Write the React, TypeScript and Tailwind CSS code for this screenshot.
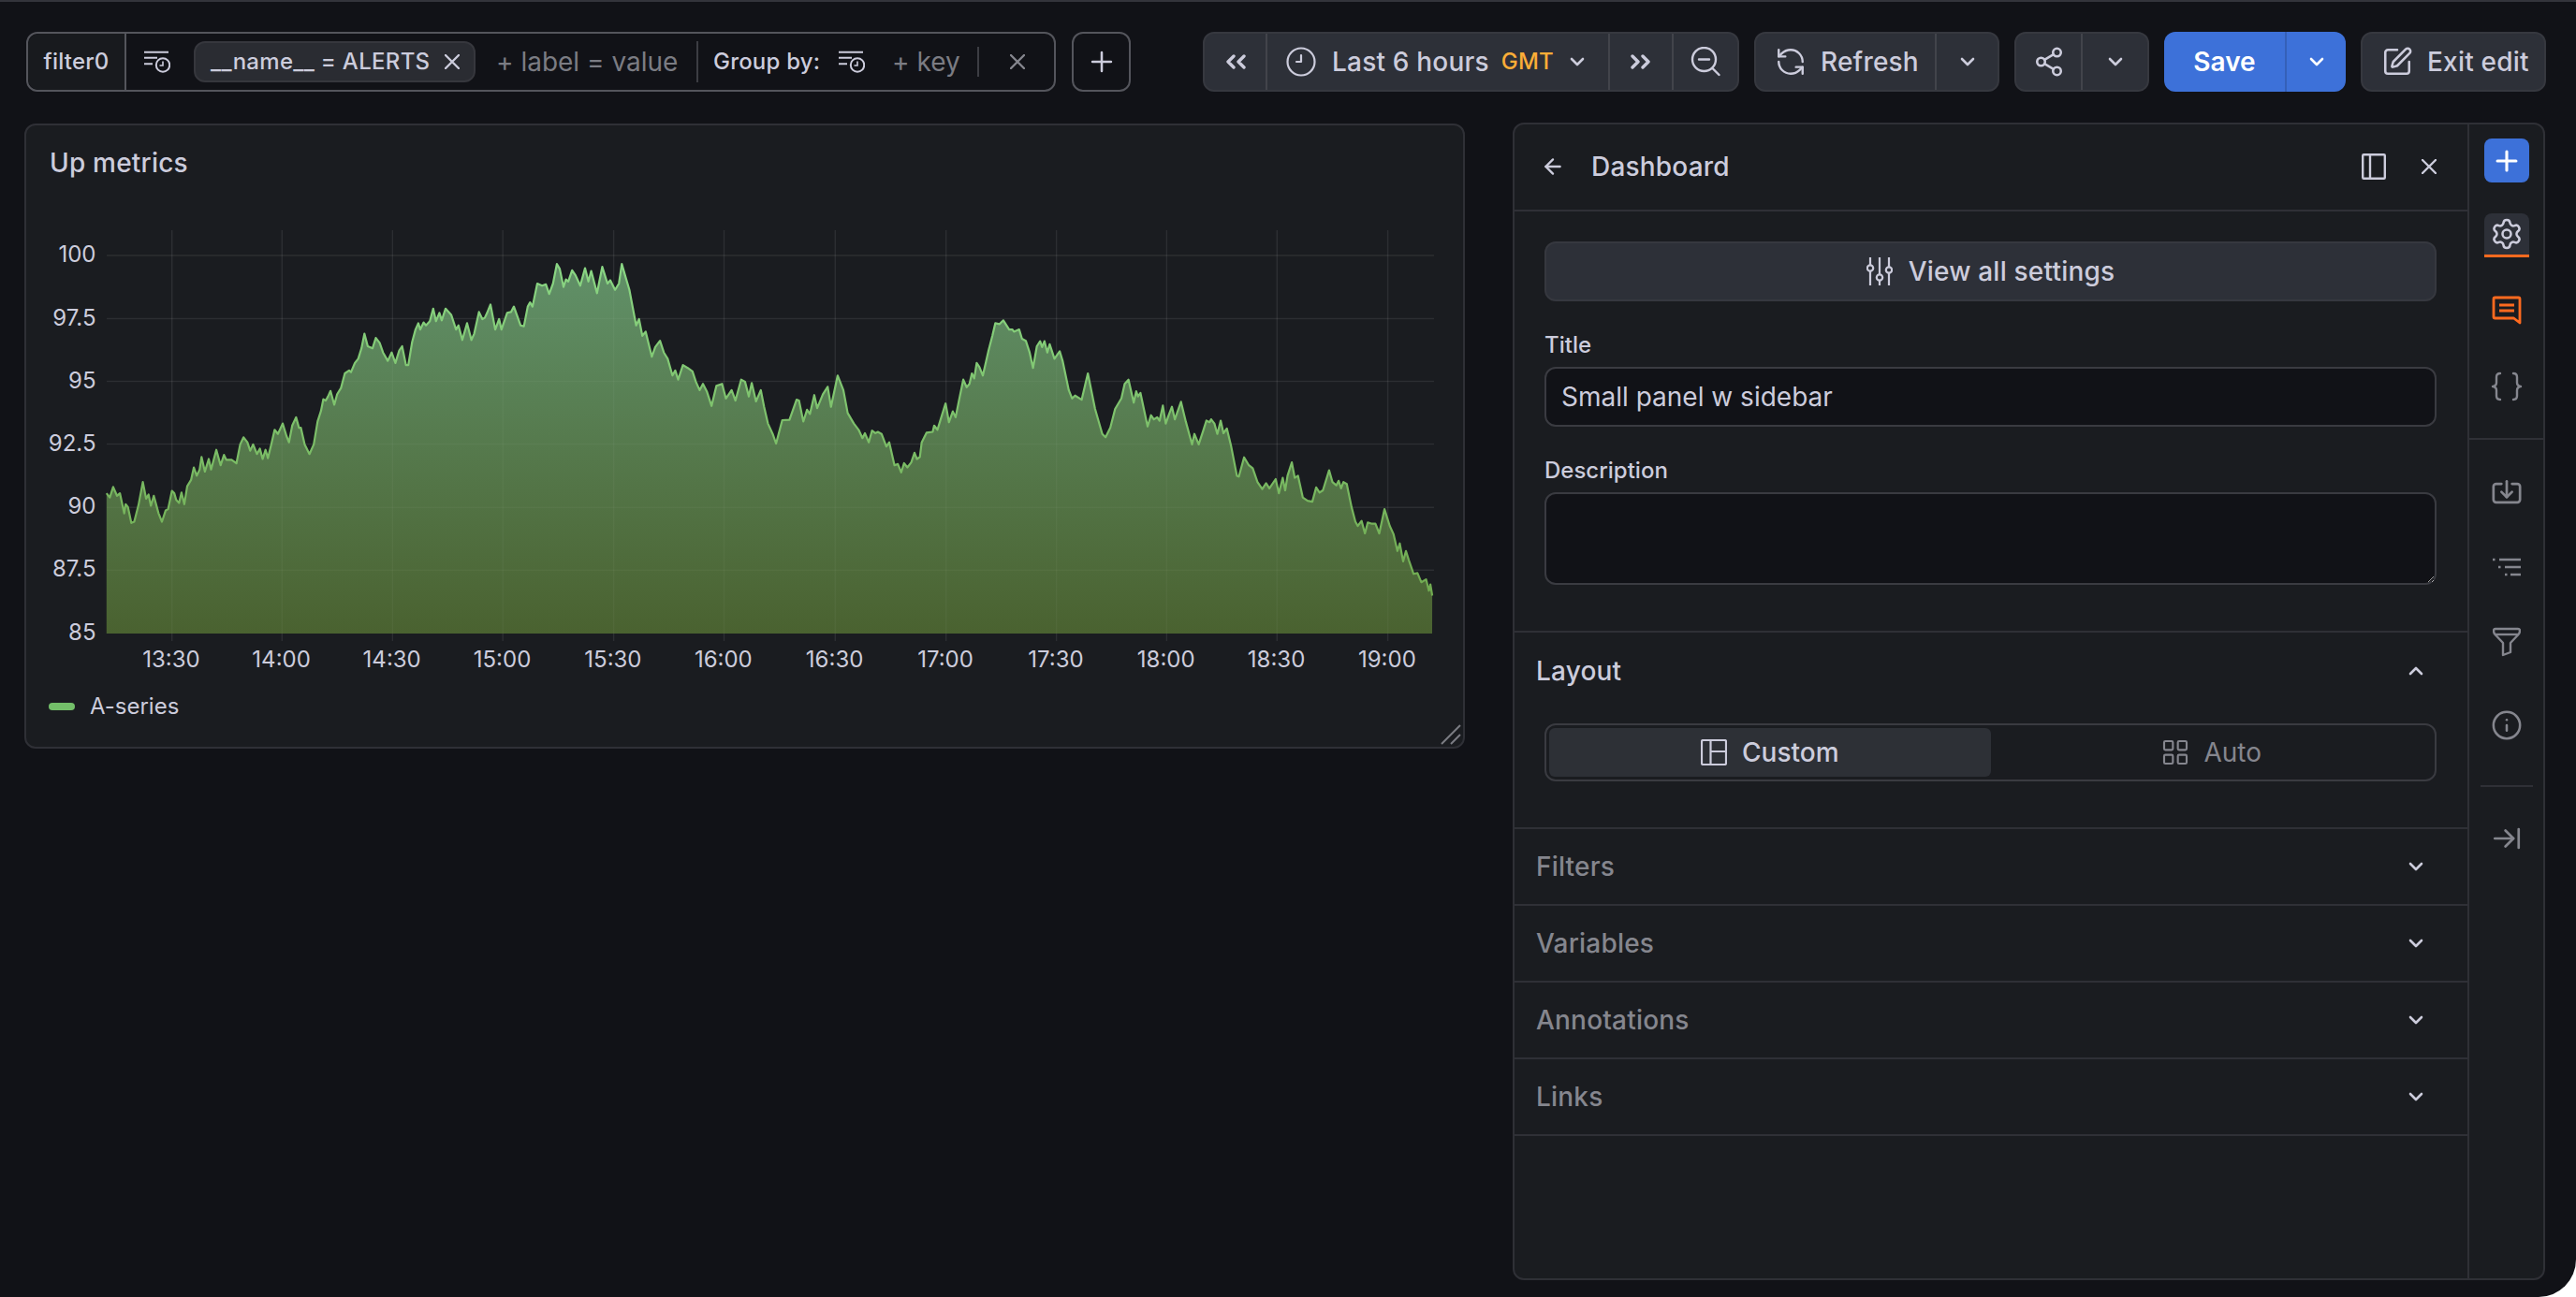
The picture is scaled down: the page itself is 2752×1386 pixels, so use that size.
import { ArrowLeft, ArrowRightToLine, Import, Info, LayoutGrid, Plus, RefreshCcw, Settings, Share2, SquarePen } from 'lucide-react';
import type { ReactNode } from 'react';

// points read off the reference, in crop coordinates (left half, right half)
const leftPts = [223,912,230,922,237,897,245,918,251,912,260,960,263,938,268,945,275,983,281,980,290,940,299,885,306,925,311,915,316,942,322,918,332,960,339,980,347,953,352,950,360,906,365,912,369,928,375,935,380,910,386,938,392,895,400,880,406,850,412,870,418,855,422,825,429,860,437,830,442,855,453,808,462,845,469,820,474,832,485,832,495,840,503,795,510,778,518,790,524,810,530,795,538,818,544,805,550,830,556,808,561,828,568,795,575,760,582,770,592,745,600,775,605,790,612,750,620,730,626,755,630,755,638,795,648,818,657,795,665,740,672,715,677,687,682,690,687,680,692,667,700,700,706,675,714,660,722,625,731,618,735,622,743,600,750,590,757,565,763,530,770,560,780,565,787,540,795,552,802,575,812,595,820,575,828,600,836,570,842,560,850,605,855,605,863,550,870,520,876,505,880,520,887,503,892,510,900,500,907,470,913,500,920,480,925,498,933,470,945,485,955,520,960,510,968,545,978,505,987,545,993,530,1003,478,1010,495,1015,492,1020,480,1027,460,1037,520,1045,495,1050,520,1062,480,1070,478,1076,465,1090,510,1097,512,1105,465,1110,455,1115,465,1125,410,1135,415,1143,412,1150,435,1158,410,1166,363,1172,375,1180,418,1185,400,1190,405,1198,378,1205,390,1215,415,1225,373,1232,405,1238,380,1250,433,1261,370,1272,410,1278,402,1288,425,1296,410,1302,363,1310,395,1318,425,1322,450,1332,510,1338,495,1345,535,1352,525,1365,585,1372,562,1382,547,1390,575,1398,590,1408,630,1414,618,1420,640,1430,605,1440,612,1450,620,1457,645,1465,665,1472,650,1480,668,1490,703,1500,655,1512,650,1520,685,1532,665,1540,690,1552,640,1560,645];
const rightPts = [0,680,6,648,15,692,25,665,32,705,40,745,50,770,57,793,70,737,85,736,100,688,105,690,114,740,122,712,128,722,137,677,143,708,155,675,165,657,172,705,186,630,198,665,207,720,220,745,230,760,238,780,243,768,251,790,258,762,265,768,270,765,278,770,288,800,294,790,305,845,312,842,319,862,325,840,332,850,340,838,347,815,352,830,358,825,362,790,372,767,385,765,388,750,395,760,403,730,412,697,419,742,427,716,433,730,440,690,449,640,456,658,462,650,467,625,472,637,477,600,483,610,490,630,502,570,510,535,516,505,525,507,533,498,545,520,552,520,555,525,566,520,572,542,580,547,588,575,595,612,603,560,610,548,614,562,619,548,625,575,630,555,640,590,651,572,657,595,670,665,677,685,683,678,697,688,710,625,725,710,740,770,747,778,757,755,767,710,780,685,787,650,795,640,806,695,811,668,815,680,820,672,835,752,842,725,848,735,855,730,860,738,867,702,873,745,880,722,886,705,892,735,905,693,915,740,928,795,933,770,942,795,952,760,958,738,965,742,968,735,975,745,981,770,988,738,994,768,1001,757,1010,800,1022,870,1026,872,1037,826,1047,845,1055,852,1065,885,1075,902,1083,888,1090,900,1103,878,1110,912,1118,875,1123,905,1128,870,1137,838,1143,875,1150,870,1160,922,1170,930,1180,932,1188,898,1195,910,1202,905,1215,857,1222,885,1230,893,1235,882,1240,900,1245,885,1252,890,1262,945,1270,980,1275,990,1283,978,1290,1008,1296,982,1305,985,1312,985,1320,1008,1331,950,1342,990,1350,1010,1358,1050,1363,1032,1370,1075,1376,1050,1382,1072,1392,1105,1400,1103,1408,1125,1418,1118,1424,1145,1427,1130,1431,1157];

function toPoints(src: number[], offset: number) {
    const out: string[] = [];
    for (let i = 0; i < src.length; i += 2) {
        out.push(`${(offset + src[i] / 1.96).toFixed(1)},${(120 + src[i + 1] / 2.24).toFixed(1)}`);
    }
    return out;
}

const linePoints = [...toPoints(leftPts, 0), ...toPoints(rightPts, 800)];
const linePath = 'M' + linePoints.join('L');
const areaPath = linePath + 'L1530,677L113.8,677Z';

const yTicks = [
    { label: '100', y: 273 }, { label: '97.5', y: 340.5 }, { label: '95', y: 407.5 }, { label: '92.5', y: 474.5 },
    { label: '90', y: 542.3 }, { label: '87.5', y: 609.3 }, { label: '85', y: 677 },
];
const xTicks = [
    { label: '13:30', x: 183.7 }, { label: '14:00', x: 301.3 }, { label: '14:30', x: 419.4 }, { label: '15:00', x: 537.2 },
    { label: '15:30', x: 655.6 }, { label: '16:00', x: 773.5 }, { label: '16:30', x: 892.3 }, { label: '17:00', x: 1010.7 },
    { label: '17:30', x: 1128.6 }, { label: '18:00', x: 1246.4 }, { label: '18:30', x: 1364.3 }, { label: '19:00', x: 1482.6 },
];

function GridLines({ opacity }: { opacity: number }) {
    return (
        <g stroke="#ffffff" strokeOpacity={opacity} strokeWidth="1.5">
            {yTicks.slice(0, 6).map((t) => (
                <line key={t.label} x1="114" x2="1532" y1={t.y} y2={t.y} />
            ))}
            {xTicks.map((t) => (
                <line key={t.label} x1={t.x} x2={t.x} y1="246" y2="685" />
            ))}
        </g>
    );
}

function HistoryIcon() {
    return (
        <svg width="28" height="24" viewBox="0 0 28 24" fill="none" stroke="#ccccdc" strokeWidth="2" className="shrink-0">
            <path d="M0 1.7H26M0 7.7H14M0 14.3H9" />
            <circle cx="20" cy="15.5" r="7.2" />
            <path d="M20 11.5V16H16.5" strokeWidth="1.6" />
        </svg>
    );
}

function CloseIcon({ color = '#ccccdc', size = 16 }: { color?: string; size?: number }) {
    return (
        <svg width={size} height={size} viewBox="0 0 16 16" fill="none" stroke={color} strokeWidth="2.4" strokeLinecap="round" className="shrink-0">
            <path d="M1 1L15 15M15 1L1 15" />
        </svg>
    );
}

function ChevronDown({ color = '#ccccdc', up = false }: { color?: string; up?: boolean }) {
    return (
        <svg width="16" height="10" viewBox="0 0 16 10" fill="none" stroke={color} strokeWidth="2.6" strokeLinecap="round" strokeLinejoin="round" className="shrink-0">
            <path d={up ? 'M2 8L8 2L14 8' : 'M2 2L8 8L14 2'} />
        </svg>
    );
}

function DoubleChevron({ right = false }: { right?: boolean }) {
    return (
        <svg width="22" height="16" viewBox="0 0 22 16" fill="none" stroke="#ccccdc" strokeWidth="3.4" strokeLinecap="round" strokeLinejoin="round">
            <path d={right ? 'M2 2L8 8L2 14M13 2L19 8L13 14' : 'M9 2L3 8L9 14M20 2L14 8L20 14'} />
        </svg>
    );
}

function ClockIcon() {
    return (
        <svg width="32" height="32" viewBox="0 0 32 32" fill="none" stroke="#ccccdc" strokeWidth="2.2" strokeLinecap="round" strokeLinejoin="round" className="shrink-0">
            <circle cx="16" cy="16" r="14.5" />
            <path d="M16 9V16H11" />
        </svg>
    );
}

function ZoomOutIcon() {
    return (
        <svg width="32" height="32" viewBox="0 0 32 32" fill="none" stroke="#ccccdc" strokeWidth="2.4" strokeLinecap="round">
            <circle cx="14.5" cy="13.5" r="12.5" />
            <path d="M9 13.5H20M23.5 23L30.5 30" />
        </svg>
    );
}

function SlidersIcon() {
    return (
        <svg width="28" height="32" viewBox="0 0 28 32" fill="none" stroke="#ccccdc" strokeWidth="2.2" className="shrink-0">
            <path d="M4 1V9M4 16V31M14 1V19M14 26V31M24 1V11M24 18V31" />
            <circle cx="4" cy="12.5" r="3.2" />
            <circle cx="14" cy="22.5" r="3.2" />
            <circle cx="24" cy="14.5" r="3.2" />
        </svg>
    );
}

function PanelDockIcon() {
    return (
        <svg width="26" height="28" viewBox="0 0 26 28" fill="none" stroke="#ccccdc" strokeWidth="2.4">
            <rect x="1.2" y="1.2" width="23.6" height="25.6" rx="1" />
            <path d="M9 1V27" />
        </svg>
    );
}

function CustomLayoutIcon() {
    return (
        <svg width="28" height="28" viewBox="0 0 28 28" fill="none" stroke="#ccccdc" strokeWidth="2.2" className="shrink-0">
            <rect x="1" y="1" width="26" height="26" rx="1.5" />
            <path d="M10.5 1V27M10.5 13H27" />
        </svg>
    );
}

function CommentIcon() {
    return (
        <svg width="32" height="32" viewBox="0 0 32 32" fill="none" stroke="#ff6a1f" strokeWidth="2.8" strokeLinejoin="round">
            <path d="M3.5 2H28.5C29.5 2 30 2.5 30 3.5V29L23.5 24H3.5C2.5 24 2 23.5 2 22.5V3.5C2 2.5 2.5 2 3.5 2Z" />
            <path d="M8 10H24M8 16H24" />
        </svg>
    );
}

function BracesIcon() {
    return (
        <svg width="36" height="32" viewBox="0 0 34 32" fill="none" stroke="#85868e" strokeWidth="2.4" strokeLinecap="round" strokeLinejoin="round">
            <path d="M10 2C7 2 6 3.5 6 6V12C6 14 5 15.5 2 16C5 16.5 6 18 6 20V26C6 28.5 7 30 10 30" />
            <path d="M24 2C27 2 28 3.5 28 6V12C28 14 29 15.5 32 16C29 16.5 28 18 28 20V26C28 28.5 27 30 24 30" />
        </svg>
    );
}

function ListIcon() {
    return (
        <svg width="30" height="20" viewBox="0 0 30 20" fill="none" stroke="#85868e" strokeWidth="2.6">
            <path d="M0 2H2.5M7 2H30M6 10H8.5M13 10H30M13 18H15.5M19 18H30" />
        </svg>
    );
}

function FunnelIcon() {
    return (
        <svg width="30" height="32" viewBox="0 0 30 32" fill="none" stroke="#85868e" strokeWidth="2.4" strokeLinejoin="round">
            <path d="M3 2H27C28.5 2 29 3 29 4C29 5.5 28.5 7 27 8.5L19 17V27L11 30V17L3 8.5C1.5 7 1 5.5 1 4C1 3 1.5 2 3 2Z" />
            <path d="M2 8H28" />
        </svg>
    );
}

function ToolSlot({ className, children }: { className: string; children: ReactNode }) {
    return <div className={`flex h-12 w-12 items-center justify-center ${className}`}>{children}</div>;
}

function SectionRow({ title }: { title: string }) {
    return (
        <div className="flex h-[82px] items-center justify-between border-b-2 border-[#2f3036] pl-[23px] pr-[47px]">
            <span className="text-[28px] font-medium tracking-[0.2px] text-[#85868e]">{title}</span>
            <ChevronDown />
        </div>
    );
}

export default function App() {
    return (
        <div className="h-[1386px] w-[2752px] overflow-hidden bg-white font-['Inter',sans-serif]">
            <div className="h-full w-full rounded-br-[40px] border-t-2 border-[#33343b] bg-[#111217] text-[#ccccdc]">
                {/* top toolbar */}
                <div className="mt-8 flex h-16 items-stretch pl-7 pr-8">
                    <div className="flex w-[1100px] items-center rounded-xl border-2 border-[#54555c]">
                        <div className="flex h-full w-[105px] items-center justify-center rounded-l-xl border-r-2 border-[#54555c] bg-[#181a1e] text-2xl font-medium tracking-[0.2px]">filter0</div>
                        <div className="ml-[19px]"><HistoryIcon /></div>
                        <div className="ml-[25px] flex h-11 w-[301px] items-center rounded-xl border-2 border-[#36373d] bg-[#2a2c32] pl-4 text-2xl font-medium tracking-[0.3px]">
                            <span className="w-[250px] whitespace-nowrap">__name__ = ALERTS</span>
                            <CloseIcon />
                        </div>
                        <span className="ml-[22px] w-[193px] whitespace-nowrap text-[28px] text-[#7b7c83]">+ label = value</span>
                        <div className="ml-[21px] h-11 w-0.5 bg-[#3c3d43]" />
                        <span className="ml-[16px] w-[114px] whitespace-nowrap text-2xl font-medium tracking-[0.2px]">Group by:</span>
                        <div className="ml-[20px]"><HistoryIcon /></div>
                        <span className="ml-[29px] w-[69px] whitespace-nowrap text-[28px] text-[#7b7c83]">+ key</span>
                        <div className="ml-[22px] h-8 w-0.5 bg-[#3c3d43]" />
                        <div className="ml-[33px]"><CloseIcon color="#85868e" /></div>
                    </div>
                    <div className="ml-[17px] flex w-[63px] items-center justify-center rounded-xl border-2 border-[#54555c]">
                        <Plus size={34} strokeWidth={1.8} />
                    </div>

                    <div className="ml-auto flex w-[573px] items-stretch rounded-xl border-2 border-[#36383f] bg-[#2d3038]">
                        <div className="flex w-[67px] items-center justify-center border-r-2 border-[#42444b]"><DoubleChevron /></div>
                        <div className="flex w-[366px] items-center border-r-2 border-[#42444b] pl-5">
                            <ClockIcon />
                            <span className="ml-[17px] whitespace-nowrap text-[28px] font-medium tracking-[0.2px]">Last 6 hours</span>
                            <span className="ml-[13px] text-2xl font-medium tracking-[0.2px] text-[#fbad37]">GMT</span>
                            <div className="ml-[17px]"><ChevronDown /></div>
                        </div>
                        <div className="flex w-[68px] items-center justify-center border-r-2 border-[#42444b]"><DoubleChevron right /></div>
                        <div className="flex flex-1 items-center justify-center"><ZoomOutIcon /></div>
                    </div>

                    <div className="ml-4 flex w-[262px] items-stretch rounded-xl border-2 border-[#36383f] bg-[#2d3038]">
                        <div className="flex w-[193px] items-center border-r-2 border-[#42444b] pl-5">
                            <RefreshCcw size={34} strokeWidth={1.7} />
                            <span className="ml-[15px] text-[28px] font-medium tracking-[0.2px]">Refresh</span>
                        </div>
                        <div className="flex flex-1 items-center justify-center"><ChevronDown /></div>
                    </div>

                    <div className="ml-4 flex w-[144px] items-stretch rounded-xl border-2 border-[#36383f] bg-[#2d3038]">
                        <div className="flex w-[71px] items-center justify-center border-r-2 border-[#42444b]"><Share2 size={34} strokeWidth={1.8} /></div>
                        <div className="flex flex-1 items-center justify-center"><ChevronDown /></div>
                    </div>

                    <div className="ml-4 flex w-[194px] items-stretch rounded-xl bg-[#3d71d9] text-white">
                        <div className="flex w-[131px] items-center justify-center border-r-2 border-[#3560b8] text-[28px] font-semibold">Save</div>
                        <div className="flex flex-1 items-center justify-center"><ChevronDown color="#ffffff" /></div>
                    </div>

                    <div className="ml-4 flex w-[198px] items-center rounded-xl border-2 border-[#36383f] bg-[#2d3038] pl-5">
                        <SquarePen size={34} strokeWidth={1.8} />
                        <span className="ml-[15px] whitespace-nowrap text-[28px] font-medium tracking-[0.2px]">Exit edit</span>
                    </div>
                </div>

                <div className="mt-[33px] flex items-start pl-[26px]">
                    {/* panel with graph */}
                    <div className="relative mt-px h-[668px] w-[1539px] rounded-xl border-2 border-[#2f3036] bg-[#1a1c20]">
                        <div className="h-[106px] pl-[25px] pt-6 text-[28px] font-medium leading-8 tracking-[0.2px]">Up metrics</div>
                        <svg width="1535" height="480" viewBox="28 240 1535 480" className="block">
                            <defs>
                                <linearGradient id="areaFill" gradientUnits="userSpaceOnUse" x1="0" y1="280" x2="0" y2="677">
                                    <stop offset="0" stopColor="#619169" />
                                    <stop offset="1" stopColor="#4a6230" />
                                </linearGradient>
                                <linearGradient id="lineStroke" gradientUnits="userSpaceOnUse" x1="0" y1="280" x2="0" y2="677">
                                    <stop offset="0" stopColor="#8ad684" />
                                    <stop offset="1" stopColor="#6da54a" />
                                </linearGradient>
                            </defs>
                            <GridLines opacity={0.05} />
                            <path d={areaPath} fill="url(#areaFill)" />
                            <GridLines opacity={0.035} />
                            <path d={linePath} fill="none" stroke="url(#lineStroke)" strokeWidth="2.2" strokeLinejoin="round" />
                            <g fontFamily="Inter, sans-serif" fontSize="24" fill="#ccccdc">
                                {yTicks.map((t) => (
                                    <text key={t.label} x="102.5" y={t.y + 7} textAnchor="end">{t.label}</text>
                                ))}
                                {xTicks.map((t) => (
                                    <text key={t.label} x={t.x - 0.7} y="713" textAnchor="middle">{t.label}</text>
                                ))}
                            </g>
                        </svg>
                        <div className="mt-5 flex h-[30px] items-center pl-[24px] text-2xl">
                            <div className="h-2 w-7 rounded bg-[#73bf69]" />
                            <span className="ml-[16px]">A-series</span>
                        </div>
                        <svg width="22" height="22" viewBox="0 0 22 22" fill="none" stroke="#7b7c83" strokeWidth="2" className="absolute bottom-0.5 right-0.5">
                            <path d="M1 21L21 1M11 21L21 11" />
                        </svg>
                    </div>

                    {/* sidebar */}
                    <div className="ml-[51px] flex h-[1237px] w-[1103px] rounded-xl border-2 border-[#2f3036] bg-[#1a1c20]">
                        <div className="flex-1 border-r-2 border-[#2f3036]">
                            <div className="flex h-[93px] items-center border-b-2 border-[#2f3036] pb-0.5 pl-[28px] pr-[33px]">
                                <ArrowLeft size={26} strokeWidth={2.2} />
                                <span className="ml-[28px] text-[28px] font-medium tracking-[0.2px]">Dashboard</span>
                                <div className="ml-auto"><PanelDockIcon /></div>
                                <div className="ml-[38px]"><CloseIcon /></div>
                            </div>
                            <div className="border-b-2 border-[#2f3036] pb-[49px] pl-8 pr-[33px] pt-8">
                                <div className="flex h-16 items-center justify-center rounded-xl border-2 border-[#36383f] bg-[#2d3038]">
                                    <SlidersIcon />
                                    <span className="ml-[17px] text-[28px] font-medium tracking-[0.2px]">View all settings</span>
                                </div>
                                <div className="mt-8 h-[30px] text-2xl font-medium leading-[30px]">Title</div>
                                <input readOnly value="Small panel w sidebar" className="mt-2 block h-16 w-full rounded-xl border-2 border-[#3a3b41] bg-[#111217] pl-4 text-[28px] outline-none" />
                                <div className="mt-8 h-[30px] text-2xl font-medium leading-[30px]">Description</div>
                                <textarea readOnly value="" className="mt-2 block h-[99px] w-full rounded-xl border-2 border-[#3a3b41] bg-[#111217] outline-none" />
                            </div>
                            <div className="border-b-2 border-[#2f3036] pb-[49px]">
                                <div className="flex h-[81px] items-center justify-between pl-[23px] pr-[47px]">
                                    <span className="text-[28px] font-medium tracking-[0.2px]">Layout</span>
                                    <ChevronDown up />
                                </div>
                                <div className="ml-8 mr-[33px] mt-4 grid h-[62px] grid-cols-2 rounded-xl border-2 border-[#3a3b41] p-[3px]">
                                    <div className="flex items-center justify-center rounded-md bg-[#2d3036]">
                                        <CustomLayoutIcon />
                                        <span className="ml-[16px] text-[28px] font-medium">Custom</span>
                                    </div>
                                    <div className="flex items-center justify-center text-[#85868e]">
                                        <LayoutGrid size={32} strokeWidth={1.6} />
                                        <span className="ml-[14px] text-[28px]">Auto</span>
                                    </div>
                                </div>
                            </div>
                            <SectionRow title="Filters" />
                            <SectionRow title="Variables" />
                            <SectionRow title="Annotations" />
                            <SectionRow title="Links" />
                        </div>

                        {/* right tool strip */}
                        <div className="flex w-[79px] flex-col items-center">
                            <div className="mt-[15px] flex h-[47px] w-12 items-center justify-center rounded-lg bg-[#3d71d9] text-white"><Plus size={34} strokeWidth={2.2} /></div>
                            <div className="mt-[33px] flex h-[47px] w-12 items-center justify-center rounded-t-lg border-b-[3px] border-[#ff6a1f] bg-[#2d3038]"><Settings size={36} strokeWidth={1.7} /></div>
                            <ToolSlot className="mt-[33px]"><CommentIcon /></ToolSlot>
                            <ToolSlot className="mt-[33px]"><BracesIcon /></ToolSlot>
                            <div className="mt-[31px] h-0.5 w-full shrink-0 bg-[#2f3036]" />
                            <ToolSlot className="mt-[33px] text-[#85868e]"><Import size={34} strokeWidth={1.9} /></ToolSlot>
                            <ToolSlot className="mt-[31px]"><ListIcon /></ToolSlot>
                            <ToolSlot className="mt-[32px]"><FunnelIcon /></ToolSlot>
                            <ToolSlot className="mt-[41px] text-[#85868e]"><Info size={34} strokeWidth={1.8} /></ToolSlot>
                            <div className="mt-10 h-0.5 w-14 shrink-0 bg-[#2f3036]" />
                            <ToolSlot className="mt-[31px] text-[#85868e]"><ArrowRightToLine size={34} strokeWidth={1.9} /></ToolSlot>
                        </div>
                    </div>
                </div>
            </div>
        </div>
    );
}
